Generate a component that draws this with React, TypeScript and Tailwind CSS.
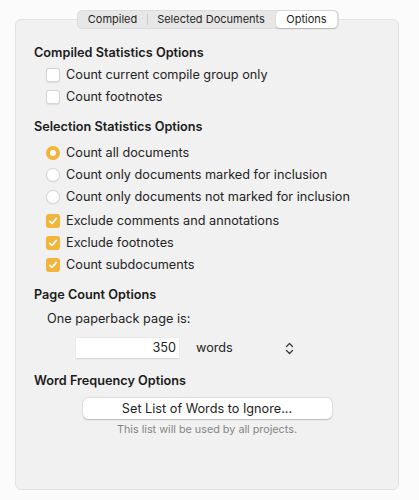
import React from 'react';

const font = { fontFamily: 'Inter, "Noto Sans", sans-serif' };

const Check = ({ checked }: { checked?: boolean }) => (
    <span
        className={`w-[14px] h-[14px] rounded-[3px] flex items-center justify-center shrink-0 ${checked ? 'bg-[#f2b43b]' : 'bg-white border border-[#d4d4d4] shadow-[0_0.5px_1px_rgba(0,0,0,0.08)]'}`}
    >
        {checked && (
            <svg width="10" height="10" viewBox="0 0 10 10" fill="none">
                <path d="M1.8 5.3 L4 7.5 L8.3 2.4" stroke="white" strokeWidth="1.7" strokeLinecap="round" strokeLinejoin="round" />
            </svg>
        )}
    </span>
);

const Radio = ({ checked }: { checked?: boolean }) => (
    <span
        className={`w-[14px] h-[14px] rounded-full flex items-center justify-center shrink-0 ${checked ? 'bg-[#f2b43b]' : 'bg-white border border-[#d4d4d4] shadow-[0_0.5px_1px_rgba(0,0,0,0.08)]'}`}
    >
        {checked && <span className="w-[6px] h-[6px] rounded-full bg-white" />}
    </span>
);

const Row = ({ children, label }: { children: React.ReactNode; label: string }) => (
    <div className="h-[22px] flex items-center pl-[12px] gap-[6px]">
        {children}
        <span>{label}</span>
    </div>
);

const Heading = ({ title, className = '' }: { title: string; className?: string }) => (
    <div className={`h-[22px] flex items-center font-semibold text-[#1c1c1c] ${className}`}>{title}</div>
);

export default function App() {
    return (
        <div className="w-[419px] h-[500px] bg-[#fbfbfb] relative overflow-hidden text-[12.7px] text-[#242424]" style={font}>
            <div className="ml-[15px] mt-[19px] w-[384px] h-[471px] bg-[#f1f1f1] border border-[#e2e2e2] rounded-[6px] pl-[18px] pt-[22px]">
                <Heading title="Compiled Statistics Options" />
                <Row label="Count current compile group only"><Check /></Row>
                <Row label="Count footnotes"><Check /></Row>

                <Heading title="Selection Statistics Options" className="mt-[8px]" />
                <div className="mt-[4px]">
                    <Row label="Count all documents"><Radio checked /></Row>
                    <Row label="Count only documents marked for inclusion"><Radio /></Row>
                    <Row label="Count only documents not marked for inclusion"><Radio /></Row>
                </div>
                <div className="mt-[2px]">
                    <Row label="Exclude comments and annotations"><Check checked /></Row>
                    <Row label="Exclude footnotes"><Check checked /></Row>
                    <Row label="Count subdocuments"><Check checked /></Row>
                </div>

                <Heading title="Page Count Options" className="mt-[8px]" />
                <div className="h-[22px] flex items-center pl-[13px] mt-[2px]">One paperback page is:</div>
                <div className="h-[22px] flex items-center mt-[7px] pl-[42px]">
                    <div className="w-[103px] h-[21px] bg-white border-b border-[#dadada] shadow-[0_0_0_0.5px_rgba(0,0,0,0.06)] flex items-center justify-end pr-[3px]">350</div>
                    <span className="ml-[17px]">words</span>
                    <svg className="ml-[52px]" width="9" height="13" viewBox="0 0 9 13" fill="none">
                        <path d="M1.5 4.5 L4.5 1.5 L7.5 4.5 M1.5 8.5 L4.5 11.5 L7.5 8.5" stroke="#3a3a3a" strokeWidth="1.3" strokeLinecap="round" strokeLinejoin="round" />
                    </svg>
                </div>

                <Heading title="Word Frequency Options" className="mt-[11px]" />
                <div className="flex flex-col items-center -ml-[18px]">
                    <button className="mt-[6px] w-[249px] h-[21px] bg-white rounded-[5px] shadow-[0_0.5px_1.5px_rgba(0,0,0,0.2),0_0_0_0.5px_rgba(0,0,0,0.08)] text-[12.7px] text-[#1e1e1e] flex items-center justify-center">
                        Set List of Words to Ignore...
                    </button>
                    <div className="mt-[3px] h-[16px] flex items-center text-[10.8px] text-[#858585]">This list will be used by all projects.</div>
                </div>
            </div>

            <div className="absolute left-[77px] top-[10px] w-[262px] h-[19px] bg-[#e7e7e7] border border-[#dcdcdc] rounded-[5px] flex items-center text-[11px] text-[#262626] whitespace-nowrap">
                <span className="w-[69px] text-center">Compiled</span>
                <span className="w-px h-[11px] bg-[#c9c9c9]" />
                <span className="w-[126px] text-center">Selected Documents</span>
                <span className="ml-[2px] h-[17px] w-[61px] bg-white rounded-[4px] shadow-[0_0.5px_1.5px_rgba(0,0,0,0.2)] flex items-center justify-center">Options</span>
            </div>
        </div>
    );
}
